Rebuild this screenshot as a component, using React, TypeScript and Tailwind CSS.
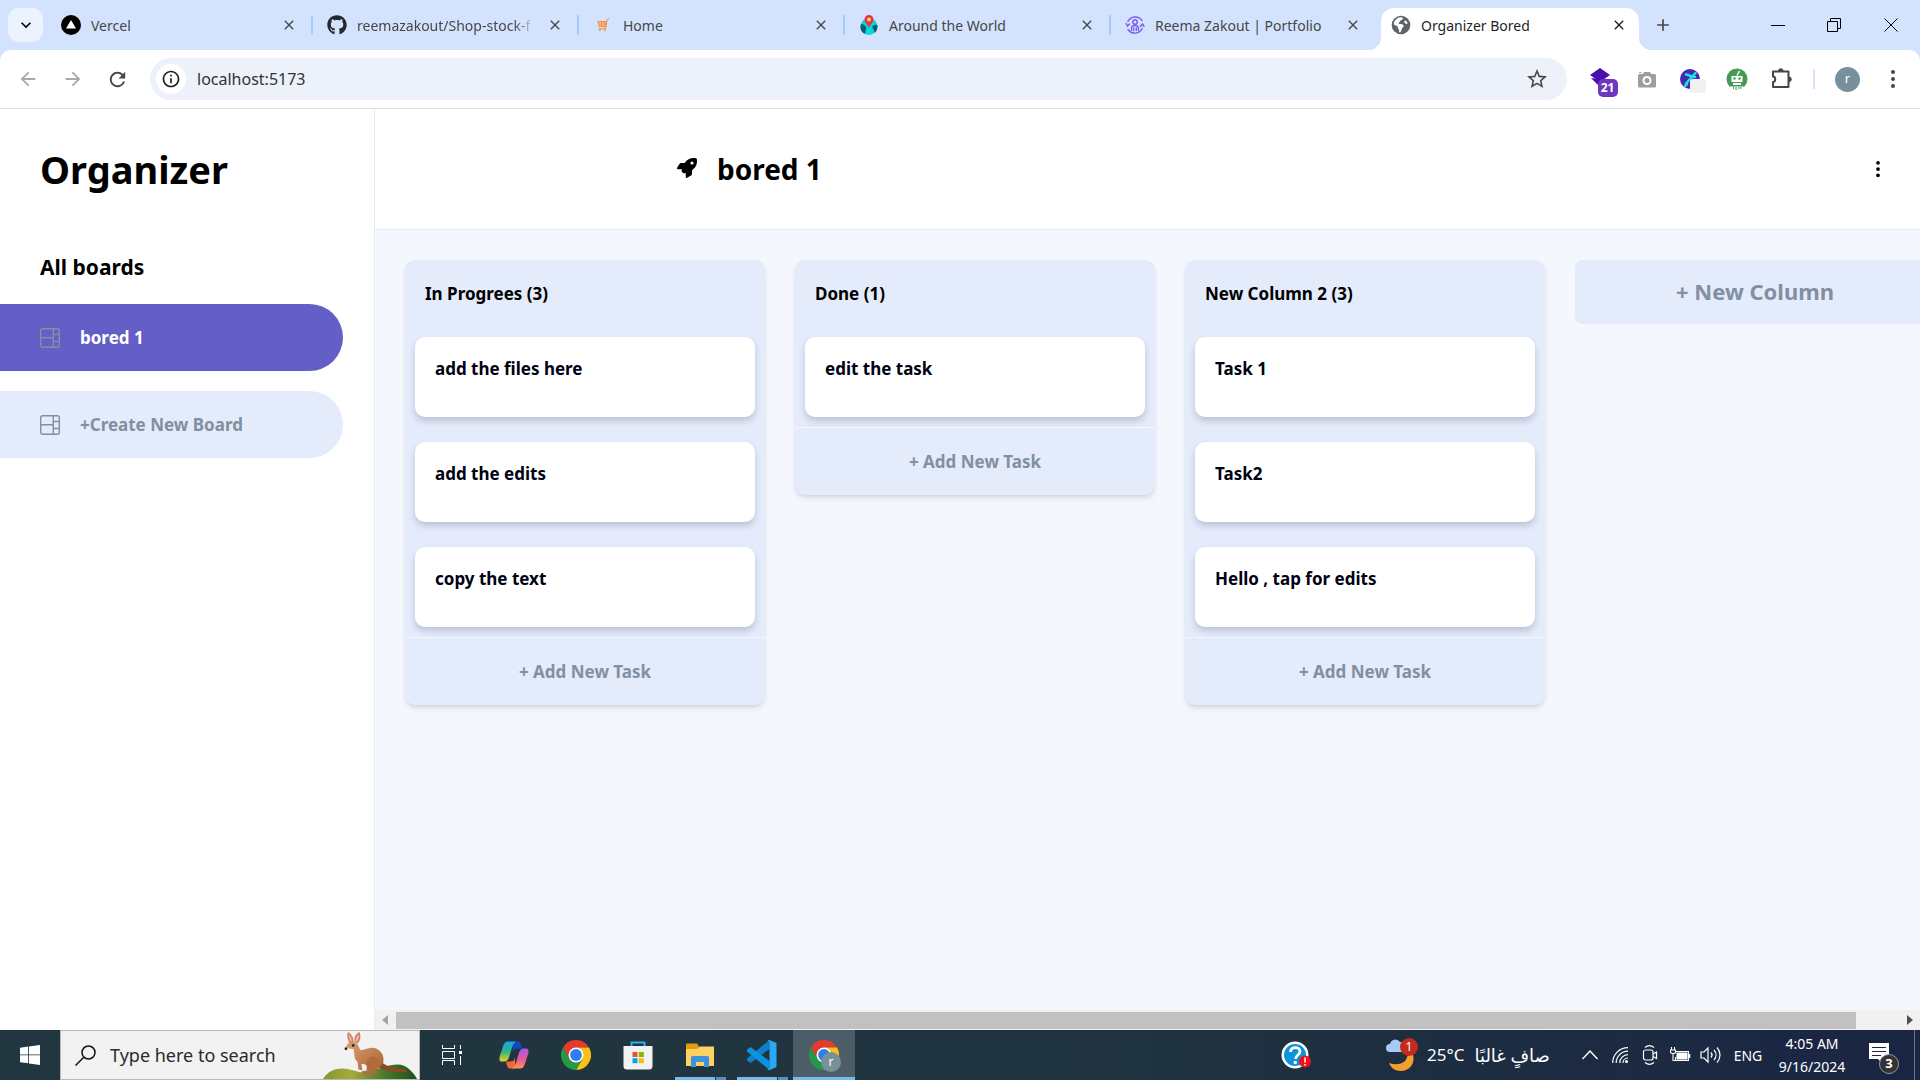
import type { ReactNode } from "react";
import { FaGithub, FaRocket } from "react-icons/fa6";
import { IoEllipsisVertical } from "react-icons/io5";
import { MdArrowBack, MdArrowForward, MdClose, MdKeyboardArrowDown, MdRefresh, MdStarOutline, MdAdd, MdOutlineInfo } from "react-icons/md";

/* ---------- favicons ---------- */

function VercelIcon() {
  return (
    <svg viewBox="0 0 20 20" className="size-5">
      <circle cx="10" cy="10" r="10" fill="#000" />
      <path d="M10 5 15 13.500H5Z" fill="#fff" />
    </svg>
  );
}

function CartIcon() {
  return (
    <svg viewBox="0 0 20 20" className="size-5" fill="none">
      <path d="M5 6.500h8.500l-.8 5H6.300Z" fill="#fbbf8a" stroke="#f28c38" />
      <path d="M15.800 3.500 14 4.800l-1.500 9H6" stroke="#f28c38" strokeLinecap="round" />
      <path d="M6 9h7M8.500 7v4M11 7v4" stroke="#f28c38" strokeWidth=".7" />
      <circle cx="7" cy="15" r=".9" fill="#f28c38" />
      <circle cx="12" cy="15" r=".9" fill="#f28c38" />
    </svg>
  );
}

function WorldPinIcon() {
  return (
    <svg viewBox="0 0 20 20" className="size-5">
      <circle cx="10" cy="11.500" r="8.500" fill="#06d6e4" />
      <path d="M2 9c2 .3 4 1 5 3 .8 1.800-.5 2.500-.5 4.500 0 1-.5 2-1 2.300A8.500 8.500 0 0 1 2 9Z" fill="#0a5f68" />
      <path d="M18.300 10c-2-.8-5 0-5 2 0 1.800 1.500 2 1.700 3.500.1 1 .3 1.800.8 2.200A8.500 8.500 0 0 0 18.300 10Z" fill="#0a5f68" />
      <path d="M10 0a4.500 4.500 0 0 0-4.500 4.500C5.500 7.500 8.500 9 10 13c1.500-4 4.500-5.500 4.500-8.500A4.500 4.500 0 0 0 10 0Z" fill="#e5344a" />
      <circle cx="10" cy="4.500" r="1.900" fill="#fcd535" />
    </svg>
  );
}

function PortfolioIcon() {
  return (
    <svg viewBox="0 0 20 20" className="size-5" fill="none" stroke="#7a5af0" strokeWidth="1.400" strokeLinecap="round">
      <path d="M2.800 6.500A8.300 8.300 0 0 1 17 5.500M17.300 13.500A8.300 8.300 0 0 1 3 14.500" />
      <path d="M1 8.500 2.500 11 4.500 9M15.500 11.500 17.500 9l1.500 2.300" />
      <circle cx="10" cy="7" r="2.200" />
      <path d="M6.500 15.500v-2a3.500 3 0 0 1 7 0v2M8.700 15.500V13M11.300 15.500V13" />
    </svg>
  );
}

function GlobeIcon() {
  return (
    <svg viewBox="0 0 20 20" className="size-5">
      <circle cx="10" cy="10" r="9.300" fill="#5f6368" />
      <path d="M11.500 2.500c.8 1.800-.3 2.600-1.800 3-1 .3-.6 1.500-1.600 2-.8.400-.7 1.500.4 1.600 2 .1 3.600.1 4.100 1.600.3 1-.4 1.500-1.200 2-.7.500-.6 2.300-1.900 4.600a7.300 7.300 0 0 1-1.500-.1c.3-1.400.2-2.400-.4-3-.9-.9-1-1.900-.6-2.700-1.600-.5-3.300-1.300-4.300-2.400A7.400 7.400 0 0 1 11.500 2.500Z" fill="#fff" />
      <path d="M14 5.500c1.300.2 2.300 1.600 2.700 3-.9.600-2.100.3-2.900-.6-.8-1-.7-2 .2-2.400Z" fill="#fff" />
    </svg>
  );
}

/* ---------- browser chrome ---------- */

const tabs: { title: string; icon: ReactNode; faded?: boolean }[] = [
  { title: "Vercel", icon: <VercelIcon /> },
  { title: "reemazakout/Shop-stock-f", icon: <FaGithub className="size-5 text-[#24292f]" />, faded: true },
  { title: "Home", icon: <CartIcon /> },
  { title: "Around the World", icon: <WorldPinIcon /> },
  { title: "Reema Zakout | Portfolio", icon: <PortfolioIcon /> },
];

function TabStrip() {
  return (
    <div className="flex h-[50px] bg-[#d3e3fd] text-[14px] text-[#474747]">
      <button aria-label="Search tabs" className="mt-2 ml-2 flex h-[34px] w-[35px] shrink-0 items-center justify-center rounded-[11px] bg-[#ecf2fe] text-black">
        <MdKeyboardArrowDown className="size-5" />
      </button>
      <div className="ml-1 flex min-w-0">
        {tabs.map((tab, i) => (
          <div key={tab.title} className="flex w-[266px] min-w-0 items-center pl-[14px]">
            <span className="shrink-0">{tab.icon}</span>
            <span className={tab.faded ? "ml-[10px] w-[178px] whitespace-nowrap [mask-image:linear-gradient(to_right,#000_88%,transparent)]" : "ml-[10px] w-[178px] whitespace-nowrap"}>
              {tab.title}
            </span>
            <button aria-label={"Close " + tab.title} className="ml-3">
              <MdClose className="size-4" />
            </button>
            {i < 4 && <span className="ml-auto h-5 w-[2px] rounded bg-[#a8c7fa]" />}
          </div>
        ))}
        <div className="relative ml-1 mt-2 flex h-[42px] w-[258px] items-center rounded-t-[13px] bg-white pb-2 pl-[10px] text-[#1f1f1f]">
          <span className="absolute -left-3 bottom-0 size-3 bg-[radial-gradient(circle_at_0_0,transparent_12px,#fff_12px)]" />
          <span className="absolute -right-3 bottom-0 size-3 bg-[radial-gradient(circle_at_100%_0,transparent_12px,#fff_12px)]" />
          <GlobeIcon />
          <span className="ml-[10px] w-[190px] whitespace-nowrap">Organizer Bored</span>
          <button aria-label="Close Organizer Bored">
            <MdClose className="size-4" />
          </button>
        </div>
      </div>
      <button aria-label="New tab" className="ml-[14px]">
        <MdAdd className="size-5" />
      </button>
      <div className="ml-auto flex text-black">
        <button aria-label="Minimize" className="flex w-[57px] items-center justify-center">
          <svg viewBox="0 0 14 14" className="size-[14px]" stroke="currentColor"><path d="M0 7.500h14" /></svg>
        </button>
        <button aria-label="Restore" className="flex w-[55px] items-center justify-center">
          <svg viewBox="0 0 14 14" className="size-[14px]" fill="none" stroke="currentColor"><path d="M.5 3.500h10v10H.5ZM3.500 3.500v-3h10v10h-3" /></svg>
        </button>
        <button aria-label="Close" className="flex w-[59px] items-center justify-center">
          <svg viewBox="0 0 14 14" className="size-[14px]" stroke="currentColor"><path d="m.5.5 13 13m0-13-13 13" /></svg>
        </button>
      </div>
    </div>
  );
}

function ToolButton({ label, children }: { label: string; children: ReactNode }) {
  return (
    <button aria-label={label} className="flex w-[45px] shrink-0 items-center justify-center">
      {children}
    </button>
  );
}

function Toolbar() {
  return (
    <div className="bg-[#d3e3fd]">
      <div className="flex h-[59px] items-center rounded-t-[11px] border-b border-[#dfe1e5] bg-white px-[5px] text-[#474747]">
        <ToolButton label="Back"><MdArrowBack className="size-[22px] text-[#a9a9a9]" /></ToolButton>
        <ToolButton label="Forward"><MdArrowForward className="size-[22px] text-[#a9a9a9]" /></ToolButton>
        <ToolButton label="Reload"><MdRefresh className="size-[23px]" /></ToolButton>
        <div className="ml-[10px] mr-3 flex h-[42px] flex-1 items-center rounded-full bg-[#ecf1fa] pl-[6px] pr-[18px]">
          <span className="flex size-[30px] items-center justify-center rounded-full bg-white text-[#1f1f1f]">
            <MdOutlineInfo className="size-5" />
          </span>
          <input aria-label="Address" defaultValue="localhost:5173" className="ml-[11px] min-w-0 flex-1 bg-transparent text-[16px] text-[#333] outline-none" />
          <button aria-label="Bookmark"><MdStarOutline className="size-6" /></button>
        </div>
        <ToolButton label="Extension with 21 alerts">
          <span className="relative block size-6">
            <svg viewBox="0 0 24 24" className="size-6" fill="#4a0db0">
              <path d="m10 1 10 7-10 7L0 8Z" />
              <path d="m1 11 9 9 8-7Z" />
            </svg>
            <span className="absolute left-2 top-3 flex h-[18px] w-5 items-center justify-center rounded-[5px] bg-[#6d38c0] text-[12px] font-bold text-white">21</span>
          </span>
        </ToolButton>
        <ToolButton label="Screenshot">
          <svg viewBox="0 0 20 20" className="size-5" fill="#9e9e9e">
            <path d="M2.500 5h3.500l1-2h6l1 2h3.500A1.500 1.500 0 0 1 19 6.500V17a1.500 1.500 0 0 1-1.500 1.500h-15A1.500 1.500 0 0 1 1 17V6.500A1.500 1.500 0 0 1 2.500 5ZM2 3h2.500v1H2Z" />
            <circle cx="10" cy="11.500" r="4.500" fill="#fff" />
            <circle cx="10" cy="11.500" r="2.500" />
          </svg>
        </ToolButton>
        <ToolButton label="Translate">
          <svg viewBox="0 0 28 28" className="size-7">
            <circle cx="12" cy="14" r="10" fill="#4628b0" />
            <path d="M8 9.500c3 0 5 3 9 2.500M17.500 8 8 18.500M9 19l-2 2" stroke="#1fe0e6" strokeWidth="2.500" strokeLinecap="round" fill="none" />
            <rect x="12" y="14" width="16" height="16" rx="3" fill="#f1f1f1" />
          </svg>
        </ToolButton>
        <ToolButton label="Robot">
          <svg viewBox="0 0 22 22" className="size-[22px]">
            <circle cx="11" cy="11" r="10.500" fill="#459a55" />
            <path d="m11 7.500 2.500-4.500" stroke="#fff" strokeWidth="1.500" />
            <path d="M5.500 8h11v6h-11ZM7 15h8v2H7Z" fill="#fff" />
            <path d="M4 18.500h14l-1.500 3h-11Z" fill="#fff" />
            <path d="M7.500 19v2M10 19v3M13 19v2M15 19v2" stroke="#459a55" />
            <circle cx="8.500" cy="10.500" r="1.200" fill="#459a55" />
            <circle cx="13.500" cy="10.500" r="1.200" fill="#459a55" />
          </svg>
        </ToolButton>
        <ToolButton label="Extensions">
          <svg viewBox="0 0 22 22" className="size-[22px]" fill="none" stroke="#474747" strokeWidth="2" strokeLinejoin="round">
            <path d="M2 3.500h15.500v15.500H2v-5c3-.2 3-5.300 0-5.500Z" />
            <path d="M7.500 3a2.300 2.300 0 0 1 4.600 0ZM18 9a2.300 2.300 0 0 1 0 4.600Z" fill="#474747" strokeWidth="1" />
          </svg>
        </ToolButton>
        <span className="ml-[9px] mr-[10px] h-5 w-[2px] bg-[#d3e3fd]" />
        <ToolButton label="Profile">
          <span className="flex size-[25px] items-center justify-center rounded-full bg-[#78909c] text-[13px] text-white">r</span>
        </ToolButton>
        <ToolButton label="Menu">
          <svg viewBox="0 0 4 18" className="h-[18px] w-1" fill="#474747"><circle cx="2" cy="2" r="2" /><circle cx="2" cy="9" r="2" /><circle cx="2" cy="16" r="2" /></svg>
        </ToolButton>
      </div>
    </div>
  );
}

/* ---------- organizer app ---------- */

const columns = [
  { name: "In Progrees", tasks: ["add the files here", "add the edits", "copy the text"] },
  { name: "Done", tasks: ["edit the task"] },
  { name: "New Column 2", tasks: ["Task 1", "Task2", "Hello , tap for edits"] },
];

function BoardIcon() {
  return (
    <svg viewBox="0 0 20 20" className="size-5 shrink-0" fill="none" stroke="#828fa3" strokeWidth="1.400">
      <rect x=".7" y=".7" width="18.600" height="18.600" rx="2" />
      <path d="M13.300.7v18.600M.7 9.800h12.600M13.300 6.500h6M13.300 13.500h6" />
    </svg>
  );
}

function Sidebar() {
  return (
    <aside className="w-[375px] shrink-0 border-r border-[#e4ebfa] bg-white">
      <h1 className="ml-10 mt-[30px] text-[38px] leading-[60px] font-bold">Organizer</h1>
      <h2 className="ml-10 mt-[53px] text-[21px] leading-[30px] font-bold">All boards</h2>
      <nav className="mt-[22px] flex flex-col gap-5 pr-[31px] text-[17px] font-bold">
        <button className="flex h-[67px] items-center gap-5 rounded-r-full bg-[#635fc7] pl-10 text-white">
          <BoardIcon />
          bored 1
        </button>
        <button className="flex h-[67px] items-center gap-5 rounded-r-full bg-[#e4ebfa] pl-10 text-[#828fa3]">
          <BoardIcon />
          +Create New Board
        </button>
      </nav>
    </aside>
  );
}

function Board() {
  return (
    <section className="flex min-w-0 flex-1 flex-col bg-[#f4f7fe]">
      <header className="flex h-[121px] shrink-0 items-center border-b border-[#e4ebfa] bg-white pl-[302px] pr-8">
        <FaRocket className="mb-[2px] size-5" />
        <h2 className="ml-5 text-[28px] font-bold">bored 1</h2>
        <button aria-label="Board options" className="ml-auto"><IoEllipsisVertical className="size-5" /></button>
      </header>
      <div className="flex flex-1 items-start gap-[30px] overflow-hidden px-[30px] pt-[30px]">
        {columns.map((column) => (
          <article key={column.name} className="w-[360px] shrink-0 rounded-[10px] bg-[#e4ebfa] shadow-md">
            <h3 className="px-5 pt-5 text-[17px] leading-[27px] font-bold">
              {column.name} ({column.tasks.length})
            </h3>
            <ul className="mt-[30px] flex flex-col gap-[25px] px-[10px] pb-[10px]">
              {column.tasks.map((task) => (
                <li key={task} className="h-20 rounded-[10px] bg-white px-5 pt-[18px] text-[17px] leading-[27px] font-bold text-[#000112] shadow-[0_4px_6px_rgba(54,60,90,0.22)]">
                  {task}
                </li>
              ))}
            </ul>
            <button className="h-[68px] w-full border-t border-[#f4f7fd] text-[17px] font-bold text-[#828fa3]">+ Add New Task</button>
          </article>
        ))}
        <button className="h-16 w-[360px] shrink-0 rounded-[7px] bg-[#e4ebfa] pb-[2px] text-[22px] font-bold text-[#828fa3]">+ New Column</button>
      </div>
      <div className="flex h-5 items-center bg-[#f1f1f1] px-[6px]">
        <svg viewBox="0 0 6 10" className="ml-px h-[10px] w-[6px]" fill="#a3a3a3"><path d="M6 0v10L0 5Z" /></svg>
        <span className="ml-2 mr-[51px] h-[17px] flex-1 bg-[#c1c1c1]" />
        <svg viewBox="0 0 6 10" className="mr-px h-[10px] w-[6px]" fill="#505050"><path d="M0 0v10l6-5Z" /></svg>
      </div>
    </section>
  );
}

/* ---------- taskbar ---------- */

function Kangaroo() {
  return (
    <svg viewBox="0 0 98 50" className="h-[48px] w-[98px] shrink-0">
      <defs>
        <linearGradient id="hill" x1="0" x2="1">
          <stop offset="0" stopColor="#7f9a2c" />
          <stop offset=".3" stopColor="#a8a93b" />
          <stop offset=".65" stopColor="#4c7a2c" />
          <stop offset="1" stopColor="#1d4d1c" />
        </linearGradient>
        <linearGradient id="fur" x1="0" y1="0" x2="1" y2="1">
          <stop offset="0" stopColor="#dfa071" />
          <stop offset="1" stopColor="#a2602f" />
        </linearGradient>
      </defs>
      <path d="M0 50c5-8 12-11 20-11 8 0 13 3 20 4 14-1 26-8 38-8 9 0 16 8 20 15Z" fill="url(#hill)" />
      <path d="M57 27c5 9 14 12 30 13 1 2 0 3-2 3-14 0-26-3-33-9Z" fill="#8a4a26" />
      <path d="M24 17c1-4 4-6 8-6 4 1 5 5 7 9 4 0 8-3 13-2.500 8 1 12 8 11 14.500-1 4-5 5-7 9l-1 4H42l-2-3 8-1c-1-4-3-7-8-7l1 7-4-1-1-8c-4-3-3-8-4-13-3 0-7-1-8-3Z" fill="url(#fur)" />
      <path d="M47 29c3-4 9-3 11 1 1 4-2 7-5 9l-1 3-7-1c2-3-1-7 2-12Z" fill="#b06b38" />
      <path d="M28 13C25 8 25 4 26 1c4 2 6 6 6 11ZM33 11c-1-5 1-8 5-10 2 5 1 9-2 12Z" fill="#c98560" />
      <path d="M29 11c-2-3-2-6-2-8 2 2 3 5 3 8ZM34 11c0-4 1-6 3-8 1 4 0 6-2 8Z" fill="#f5b3ae" />
      <circle cx="31.500" cy="15" r="1.500" fill="#1e2d40" />
      <circle cx="24" cy="18.500" r="1.500" fill="#2b2527" />
    </svg>
  );
}

function ChromeLogo() {
  return (
    <svg viewBox="0 0 30 30" className="size-[30px]">
      <path d="M2 7.500a15 15 0 0 1 26 0H15l-6.500 11.250Z" fill="#e33b2e" />
      <path d="M28 7.500A15 15 0 0 1 15 30l6.500-11.250L15 7.500Z" fill="#fbc116" />
      <path d="M15 30A15 15 0 0 1 2 7.500l6.500 11.250h13Z" fill="#279847" />
      <circle cx="15" cy="15" r="7.500" fill="#fff" />
      <circle cx="15" cy="15" r="5.900" fill="#2f7df0" />
    </svg>
  );
}

function CopilotLogo() {
  return (
    <svg viewBox="0 0 30 28" className="h-7 w-[30px]">
      <defs>
        <linearGradient id="cpA" x1="0" y1="0" x2="0" y2="1">
          <stop offset="0" stopColor="#19a7e8" /><stop offset=".5" stopColor="#2eb485" /><stop offset="1" stopColor="#f3d01c" />
        </linearGradient>
        <linearGradient id="cpB" x1="0" y1="0" x2="0" y2="1">
          <stop offset="0" stopColor="#a259f0" /><stop offset=".55" stopColor="#e9588f" /><stop offset="1" stopColor="#fb9357" />
        </linearGradient>
      </defs>
      <path d="M14 .5h5c3 0 3 4 4 7h-5c-2 0-3 1-4 4Z" fill="#1146c4" />
      <path d="M16 27.500h-5c-3 0-3-4-4-7h5c2 0 3-1 4-4Z" fill="#f4683b" />
      <path d="M9 .5h8c-2 1-3 3-4 6l-3 10c-1 2-2 4-5 4H3c-3 0-3-3-2-6l3-9c1-3 2-5 5-5Z" fill="url(#cpA)" />
      <path d="M21 27.500h-8c2-1 3-3 4-6l3-10c1-2 2-4 5-4h2c3 0 3 3 2 6l-3 9c-1 3-2 5-5 5Z" fill="url(#cpB)" />
    </svg>
  );
}

function StoreLogo() {
  return (
    <svg viewBox="0 0 30 30" className="size-[30px]">
      <path d="M8.500 7V2.500h13V7" fill="none" stroke="#29b1e6" strokeWidth="2" />
      <path d="M.5 6h29v20a3.500 3.500 0 0 1-3.500 3.500H4A3.500 3.500 0 0 1 .5 26Z" fill="#f2f2f2" />
      <path d="M9.500 12h5v5h-5Z" fill="#f25022" /><path d="M15.800 12h5v5h-5Z" fill="#7fba00" />
      <path d="M9.500 18.200h5v5h-5Z" fill="#00a4ef" /><path d="M15.800 18.200h5v5h-5Z" fill="#ffb900" />
    </svg>
  );
}

function FolderLogo() {
  return (
    <svg viewBox="0 0 28 24" className="h-6 w-7">
      <path d="M0 1.500Q0 .5 1 .5h10l2 3v4H0Z" fill="#e39c0b" />
      <path d="M0 6h11l3-2.500h14V23H0Z" fill="#fdd262" />
      <path d="M5 24V14.500c0-1 1-1.500 2-1.500h14c1 0 2 .5 2 1.500V24h-5v-5h-8v5Z" fill="#3d93dc" />
    </svg>
  );
}

function CodeLogo() {
  return (
    <svg viewBox="0 0 30 30" className="size-[30px]">
      <path d="M22.500 0v9L3.500 23 0 20.500v-2Z" fill="#0f7fcb" />
      <path d="M22.500 30v-9L3.500 7 0 9.500v2Z" fill="#0a93df" />
      <path d="m22.500 0 7 3v24l-7 3c-1 0-1.500 0-2.500-1 1.200.5 2.500-.3 2.500-1.500v-25C22.500 1.300 21.200.5 20 1c1-1 1.500-1 2.500-1Z" fill="#2aa8f3" />
    </svg>
  );
}

function TaskButton({ label, children, running, active }: { label: string; children: ReactNode; running?: boolean; active?: boolean }) {
  return (
    <button aria-label={label} className={active ? "relative flex w-[62px] items-center justify-center bg-[#4d5d68]" : "relative flex w-[62px] items-center justify-center"}>
      {children}
      {running && <span className="absolute bottom-0 left-[6px] flex h-[3px] w-[51px] gap-px"><span className="flex-1 bg-[#76b9ed]" /><span className="w-[10px] bg-[#5b8fb7]" /></span>}
      {active && <span className="absolute inset-x-0 bottom-0 h-[3px] bg-[#76b9ed]" />}
    </button>
  );
}

function TrayButton({ label, children }: { label: string; children: ReactNode }) {
  return <button aria-label={label} className="flex w-[30px] items-center justify-center">{children}</button>;
}

function Taskbar() {
  return (
    <footer className="flex h-[50px] shrink-0 bg-linear-to-r from-[#21363f] via-[#20343f] via-55% to-[#1a2543] text-white">
      <button aria-label="Start" className="flex w-[60px] items-center justify-center">
        <svg viewBox="0 0 20 20" className="size-5" fill="#fff"><path d="M0 2.800 8.200 1.600v7.900H0ZM9 1.500 20 0v9.500H9ZM0 10.300h8.200v8L0 17.200ZM9 10.300h11V20L9 18.500Z" /></svg>
      </button>
      <div className="mr-px flex w-[360px] items-center border border-[#b8b8b8] bg-[#f2f2f2] pl-[14px] text-[#2b2b2b]">
        <svg viewBox="0 0 21 21" className="size-[21px] shrink-0" fill="none" stroke="#111" strokeWidth="1.500"><circle cx="13.500" cy="7.500" r="6.500" /><path d="M8.800 12.200.5 20.500" /></svg>
        <input aria-label="Search" placeholder="Type here to search" className="ml-[14px] min-w-0 flex-1 bg-transparent text-[18px] outline-none placeholder:text-[#2b2b2b]" />
        <Kangaroo />
      </div>
      <TaskButton label="Task view">
        <svg viewBox="0 0 20 20" className="size-5" fill="none" stroke="#fff"><path d="M.5 0v3.500h12V0M.5 20v-4.500h12V20M.5 6.500h12v7H.5ZM18.500 0v4M18.500 11v9" /><path d="M17 6h3v3h-3Z" fill="#fff" stroke="none" /></svg>
      </TaskButton>
      <TaskButton label="Copilot"><CopilotLogo /></TaskButton>
      <TaskButton label="Chrome"><ChromeLogo /></TaskButton>
      <TaskButton label="Store"><StoreLogo /></TaskButton>
      <TaskButton label="File Explorer" running><FolderLogo /></TaskButton>
      <TaskButton label="Code editor" running><CodeLogo /></TaskButton>
      <TaskButton label="Chrome window" active>
        <ChromeLogo />
        <span className="absolute right-[14px] top-[22px] flex size-5 items-center justify-center rounded-full bg-[#78909c] text-[12px]">r</span>
      </TaskButton>

      <button aria-label="Get help" className="ml-auto flex w-[30px] items-center justify-center">
        <svg viewBox="0 0 30 28" className="h-7 w-[30px]">
          <circle cx="14" cy="14" r="13.500" fill="#fff" />
          <circle cx="14" cy="14" r="11" fill="#0c93d8" />
          <path d="M9.500 11c0-6 9.500-5.500 9.500-.5 0 3.500-4.500 3.500-4.500 7.500" stroke="#fff" strokeWidth="2.800" fill="none" />
          <circle cx="14.300" cy="21.500" r="1.700" fill="#fff" />
          <circle cx="24" cy="20.500" r="6" fill="#f40f1b" />
          <path d="M24 16.500v5M24 23v1.500" stroke="#fff" strokeWidth="1.600" />
        </svg>
      </button>
      <button className="ml-[75px] flex w-[189px] items-center gap-[10px] text-[17px]">
        <span className="relative block h-[34px] w-[31px] shrink-0">
          <svg viewBox="0 0 31 34" className="h-[34px] w-[31px]">
            <path d="M25 13c6 8 1 20-10 20-6 0-10-3-12-8 9 3 17 0 18-6Z" fill="#f5a02c" />
            <path d="M4 14a4 4 0 0 1 0-8 5.500 5.500 0 0 1 10-2c4-.5 6 3 5 6 0 2-1 4-3 4Z" fill="#a9c8f5" />
          </svg>
          <span className="absolute -right-px top-0 flex size-[18px] items-center justify-center rounded-full bg-[#c42b1c] text-[12px]">1</span>
        </span>
        <span>25°C</span>
        <span dir="rtl" lang="ar" className="whitespace-nowrap text-[18px]">صافٍ غالبًا</span>
      </button>
      <TrayButton label="Show hidden icons">
        <svg viewBox="0 0 16 10" className="h-[10px] w-4" fill="none" stroke="#fff" strokeWidth="1.400"><path d="m.5 9 7.500-8 7.500 8" /></svg>
      </TrayButton>
      <TrayButton label="Network">
        <svg viewBox="0 0 16 16" className="size-4" fill="none" stroke="#fff" strokeWidth="1.200"><path d="M.7 16C.7 7.500 7.500.7 16 .7M4.200 16C4.200 9.500 9.500 4.200 16 4.200M7.700 16c0-4.600 3.700-8.300 8.300-8.300M11 16c0-2.800 2.200-5 5-5" /><circle cx="14.500" cy="14.500" r="1.500" fill="#fff" stroke="none" /></svg>
      </TrayButton>
      <TrayButton label="Meet now">
        <svg viewBox="0 0 16 20" className="h-5 w-4" fill="none" stroke="#fff" strokeWidth="1.200"><path d="M3 2.500c3-2.500 6-2.500 9 0M3 17.500c3 2.500 6 2.500 9 0" /><rect x="1.500" y="5" width="9.500" height="10" rx="2" /><path d="m11 9 3.500-2v6.500L11 11.500" /></svg>
      </TrayButton>
      <TrayButton label="Battery">
        <svg viewBox="0 0 21 16" className="h-4 w-[21px]" fill="none" stroke="#fff" strokeWidth="1.100"><path d="M5 4.500h13.500v9H5.500V10" /><path d="M7 6h10v6H7Z" fill="#fff" /><path d="M19.500 7v4" strokeWidth="1.600" /><path d="M1.500 0v3M4.500 0v3M.5 3h5v2c0 2-5 2-5 0ZM3 6.500v7h3" /></svg>
      </TrayButton>
      <TrayButton label="Volume">
        <svg viewBox="0 0 21 18" className="h-[18px] w-[21px]" fill="none" stroke="#fff" strokeWidth="1.200"><path d="M1 6h3l4-4v14l-4-4H1Z" /><path d="M11 6.500c1.300 1.500 1.300 3.500 0 5M14 4c2.700 3 2.700 7 0 10M17 1.500c4 4.500 4 10.500 0 15" /></svg>
      </TrayButton>
      <button className="w-[46px] text-[14px]">ENG</button>
      <button className="w-[82px] text-[14px] leading-[23px]">
        <span className="block">4:05 AM</span>
        <span className="block">9/16/2024</span>
      </button>
      <button aria-label="Notifications" className="relative w-[61px]">
        <svg viewBox="0 0 20 20" className="-mt-1 ml-4 size-5"><path d="M0 0h20v16h-7v4l-4-4H0Z" fill="#fff" /><path d="M3 4.500h14M3 8.500h14M3 12.500h9" stroke="#1b2842" /></svg>
        <span className="absolute left-[26px] top-6 flex size-5 items-center justify-center rounded-full border border-[#999] bg-[#333] text-[13px] font-bold">3</span>
      </button>
      <span className="mr-[5px] w-px bg-[#6b7488]" />
    </footer>
  );
}

export default function App() {
  return (
    <div className="flex h-screen flex-col overflow-hidden bg-white font-['Noto_Sans','Open_Sans','DejaVu_Sans',sans-serif] text-black">
      <TabStrip />
      <Toolbar />
      <main className="flex min-h-0 flex-1">
        <Sidebar />
        <Board />
      </main>
      <Taskbar />
    </div>
  );
}
